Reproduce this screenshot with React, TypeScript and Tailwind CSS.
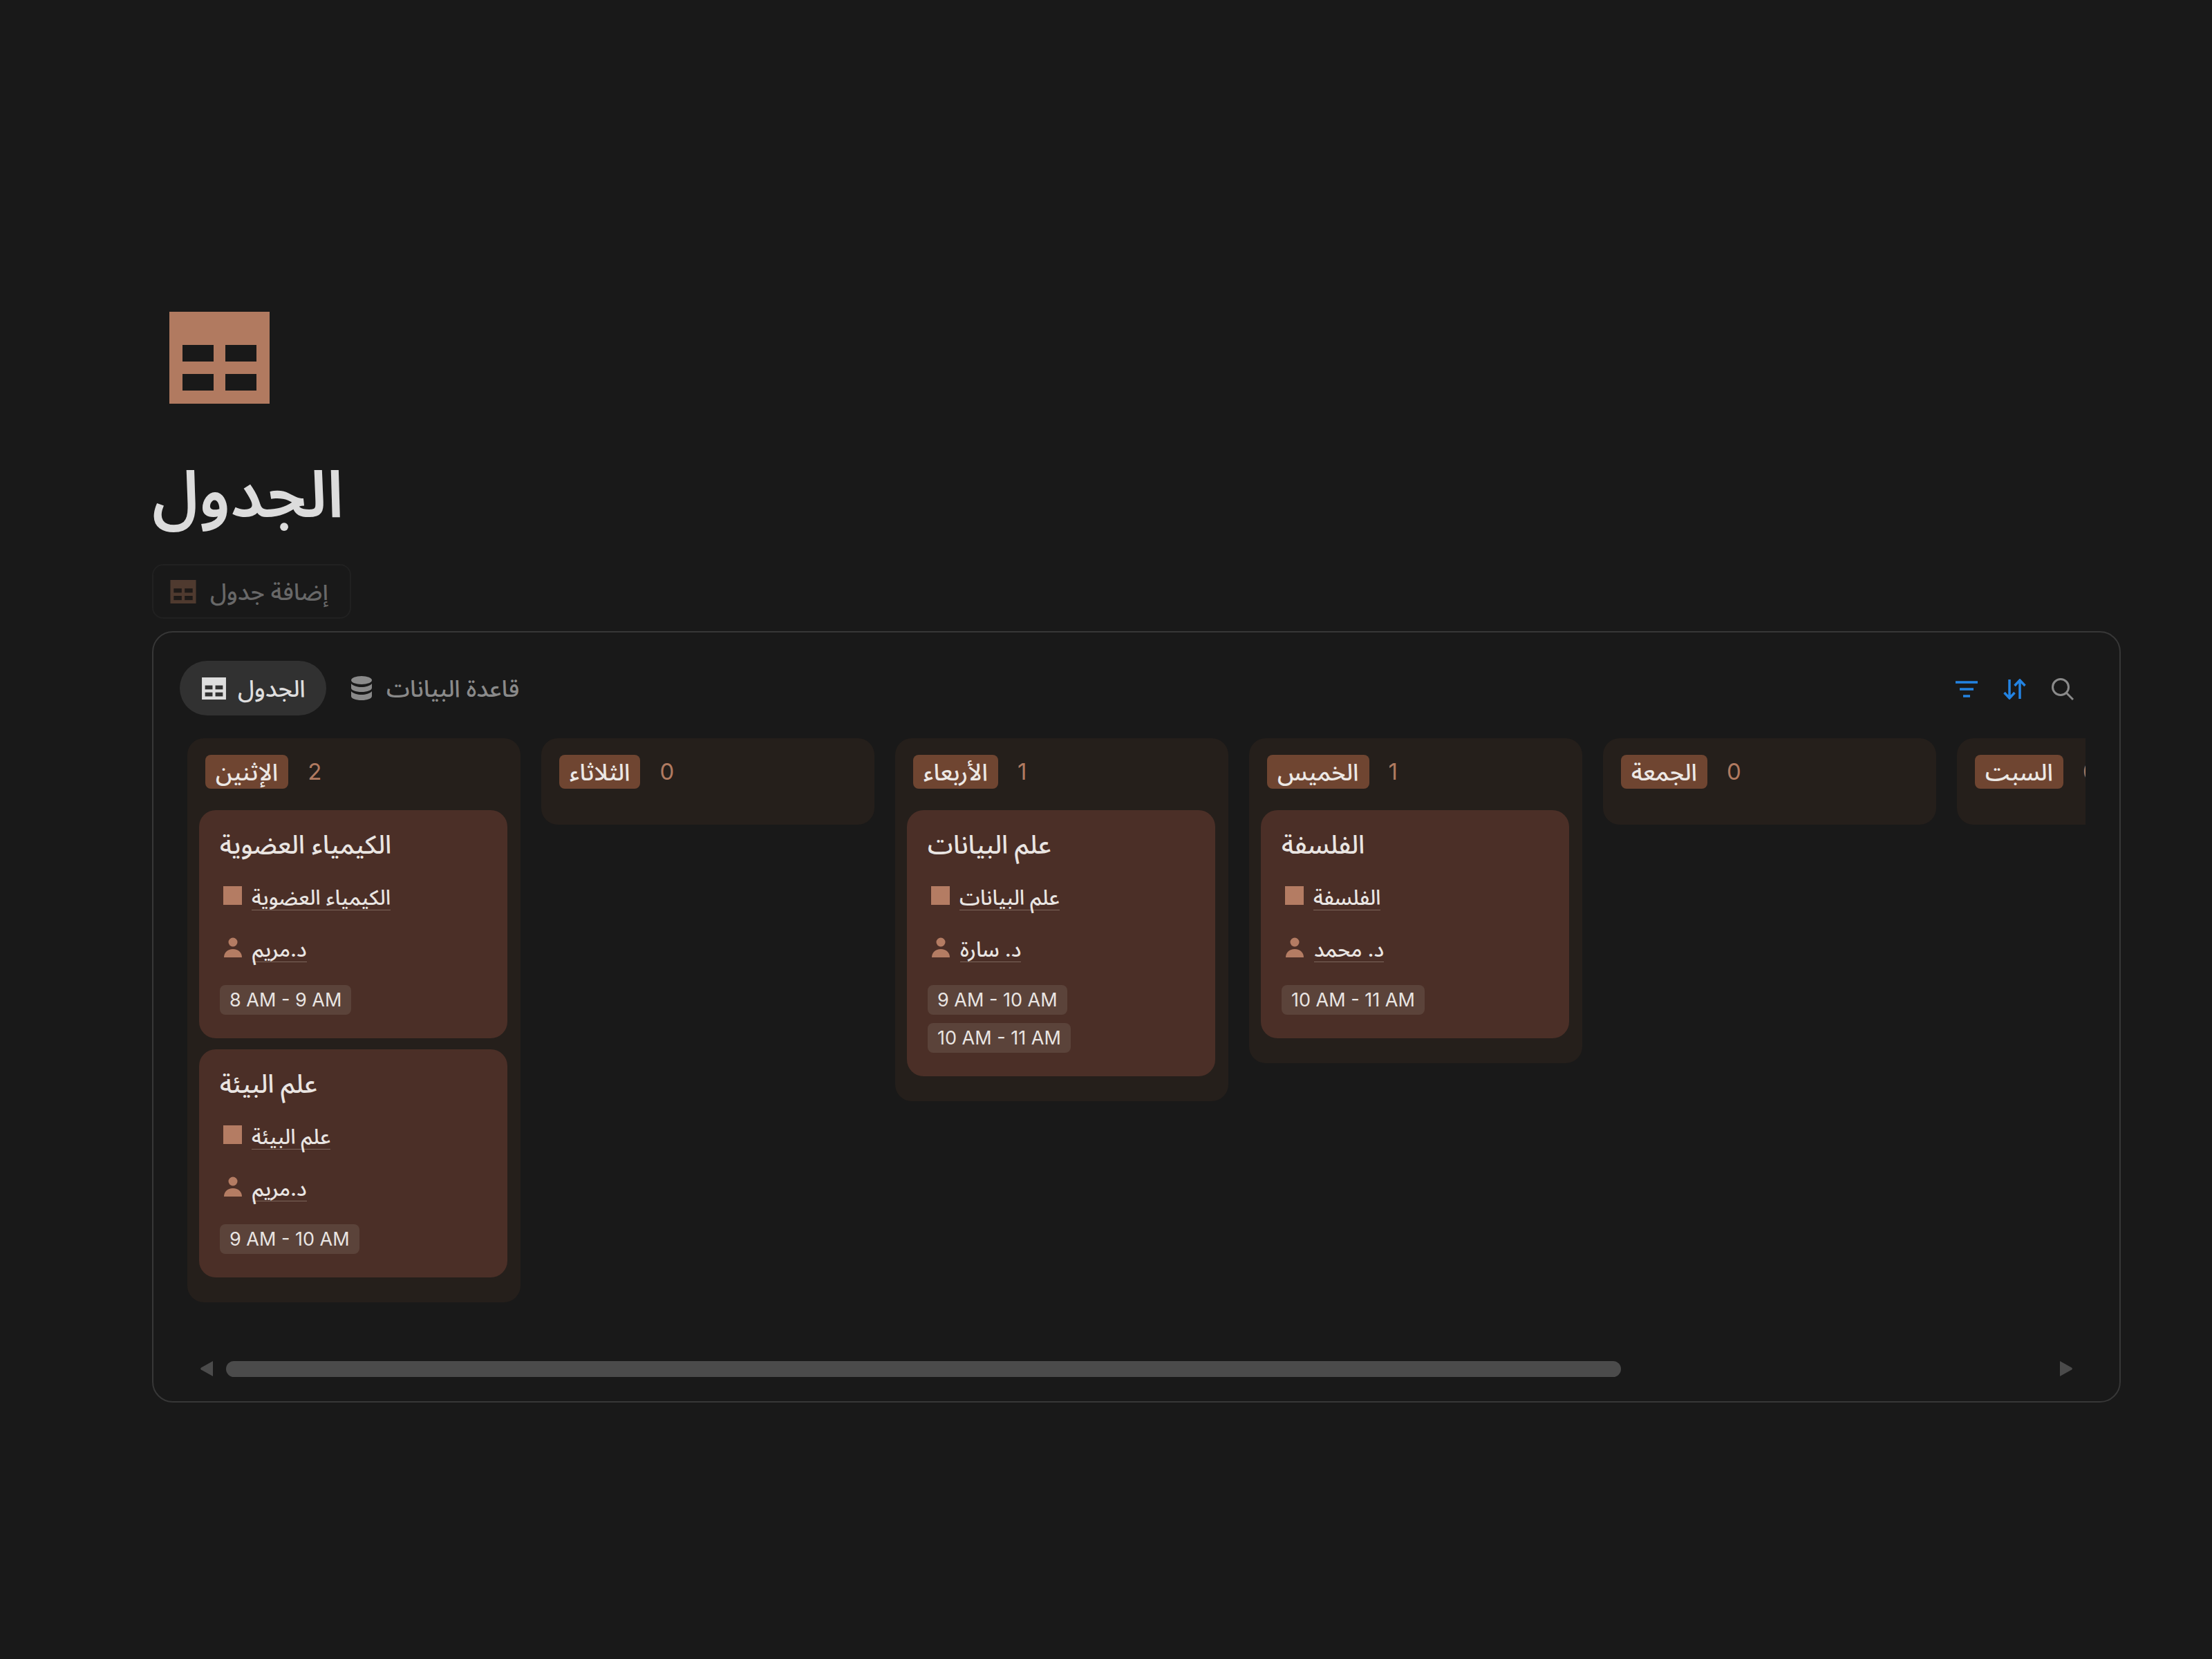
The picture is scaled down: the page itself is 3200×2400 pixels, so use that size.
const font = { fontFamily: '"Inter", "Noto Sans Arabic", "Noto Sans", "Open Sans", "DejaVu Sans", sans-serif' };

type Lesson = { title: string; teacher: string; times: string[] };
type Day = { name: string; lessons: Lesson[] };

const days: Day[] = [
  {
    name: "الإثنين",
    lessons: [
      { title: "الكيمياء العضوية", teacher: "د.مريم", times: ["8 AM - 9 AM"] },
      { title: "علم البيئة", teacher: "د.مريم", times: ["9 AM - 10 AM"] },
    ],
  },
  { name: "الثلاثاء", lessons: [] },
  {
    name: "الأربعاء",
    lessons: [{ title: "علم البيانات", teacher: "د. سارة", times: ["9 AM - 10 AM", "10 AM - 11 AM"] }],
  },
  {
    name: "الخميس",
    lessons: [{ title: "الفلسفة", teacher: "د. محمد", times: ["10 AM - 11 AM"] }],
  },
  { name: "الجمعة", lessons: [] },
  { name: "السبت", lessons: [] },
];

function TableIcon({ className, hole }: { className: string; hole: string }) {
  return (
    <svg viewBox="0 0 145 133" className={className}>
      <rect width="145" height="133" fill="currentColor" />
      <g fill={hole}>
        <rect x="19" y="48" width="45" height="24" />
        <rect x="81" y="48" width="45" height="24" />
        <rect x="19" y="90" width="45" height="24" />
        <rect x="81" y="90" width="45" height="24" />
      </g>
    </svg>
  );
}

function DatabaseIcon() {
  return (
    <svg viewBox="0 0 32 36" className="w-[32px] h-[36px] text-[#8a8a8a]" fill="currentColor">
      <ellipse cx="16" cy="6" rx="15" ry="6" />
      <path d="M1 11c3 3.500 9 5 15 5s12-1.500 15-5v6c0 3.500-6.500 6-15 6S1 20.500 1 17z" />
      <path d="M1 22c3 3.500 9 5 15 5s12-1.500 15-5v7c0 3.500-6.500 6-15 6S1 32.500 1 29z" />
    </svg>
  );
}

function PersonIcon() {
  return (
    <svg viewBox="0 0 28 29" className="w-[28px] h-[29px] mb-[6px] text-[#b47c63] shrink-0" fill="currentColor">
      <circle cx="14" cy="7" r="6.500" />
      <path d="M1 29c0-7 5-12 13-12s13 5 13 12z" />
    </svg>
  );
}

function FilterIcon() {
  return (
    <svg viewBox="0 0 32 24" className="w-[32px] h-[24px]" stroke="#2383e2" strokeWidth="3.500" fill="none">
      <path d="M0 2h32M6 12h20M11 22h10" />
    </svg>
  );
}

function SortIcon() {
  return (
    <svg viewBox="0 0 33 30" className="w-[33px] h-[30px]" stroke="#2383e2" strokeWidth="3.500" fill="none">
      <path d="M9 1v27M1.500 20l7.500 8 7.500-8M24 29V2M16.500 10L24 2l7.500 8" />
    </svg>
  );
}

function SearchIcon() {
  return (
    <svg viewBox="0 0 32 32" className="w-[32px] h-[32px]" stroke="#8a8a8a" strokeWidth="3" fill="none">
      <circle cx="13" cy="13" r="11.500" />
      <path d="M21.500 21.500L31 31" />
    </svg>
  );
}

function LessonCard({ lesson }: { lesson: Lesson }) {
  return (
    <div className="w-[446px] rounded-[24px] bg-[#4b2f27] px-[30px] pt-[24px] pb-[34px] text-[#e9e5e2]">
      <div className="h-[52px] leading-[52px] text-[37px] font-medium">{lesson.title}</div>
      <div className="mt-[28px] h-[44px] pl-[5px] flex items-center gap-[14px]">
        <div className="w-[27px] h-[27px] mb-[6px] bg-[#b47c63] shrink-0" />
        <span className="text-[30px] leading-[36px] font-medium border-b border-[#7d665c]">{lesson.title}</span>
      </div>
      <div className="mt-[31px] h-[44px] pl-[5px] flex items-center gap-[14px]">
        <PersonIcon />
        <span className="text-[30px] leading-[36px] font-medium border-b border-[#7d665c]">{lesson.teacher}</span>
      </div>
      <div className="mt-[30px] flex flex-col items-start gap-[12px]">
        {lesson.times.map((time) => (
          <span key={time} className="h-[43px] px-[14px] leading-[43px] rounded-[8px] bg-[#5b433a] text-[27px] whitespace-nowrap">
            {time}
          </span>
        ))}
      </div>
    </div>
  );
}

function DayColumn({ day }: { day: Day }) {
  return (
    <div className={`w-[482px] shrink-0 rounded-[24px] bg-[#251f1b] pl-[17px] ${day.lessons.length ? "pb-[36px]" : "pb-[52px]"} pt-[24px]`}>
      <div className="flex items-center h-[49px] pl-[9px] gap-[28px]">
        <span className="h-[49px] px-[15px] leading-[49px] rounded-[8px] bg-[#6f4531] text-[34px] font-medium text-[#ece8e5] whitespace-nowrap">
          {day.name}
        </span>
        <span className="text-[33px] text-[#b07a60]">{day.lessons.length}</span>
      </div>
      {day.lessons.length > 0 && (
        <div className="mt-[31px] flex flex-col gap-[16px]">
          {day.lessons.map((lesson) => (
            <LessonCard key={lesson.title} lesson={lesson} />
          ))}
        </div>
      )}
    </div>
  );
}

export default function App() {
  return (
    <div className="w-[3200px] h-[2400px] bg-[#191919] pt-[451px] pl-[220px]" style={font}>
      {/* page header */}
      <div className="pl-[25px]">
        <TableIcon className="w-[145px] h-[133px] text-[#b17a60]" hole="#191919" />
      </div>
      <h1 className="mt-[70px] h-[120px] leading-[120px] text-[94px] font-semibold text-[#dcdcdc]">الجدول</h1>
      <div className="mt-[42px] w-[288px] h-[79px] rounded-[16px] border-2 border-[#212121] flex items-center pl-[24px] gap-[20px]">
        <TableIcon className="w-[38px] h-[34px] text-[#4f3a2f]" hole="#1e1a18" />
        <span className="text-[34px] text-[#686868] font-medium whitespace-nowrap">إضافة جدول</span>
      </div>

      {/* database view */}
      <div className="mt-[18px] w-[2848px] h-[1116px] rounded-[30px] border-2 border-[#373737] pt-[41px] flex flex-col">
        <div className="flex items-center h-[79px] pl-[38px] pr-[66px]">
          <div className="w-[212px] h-[79px] rounded-full bg-[#313131] flex items-center pl-[32px] gap-[17px]">
            <TableIcon className="w-[35px] h-[32px] text-[#dedede]" hole="#313131" />
            <span className="text-[34px] font-medium text-[#dedede]">الجدول</span>
          </div>
          <div className="ml-[35px] flex items-center gap-[20px]">
            <DatabaseIcon />
            <span className="text-[34px] font-medium text-[#8a8a8a] whitespace-nowrap">قاعدة البيانات</span>
          </div>
          <div className="ml-auto pt-[3px] flex items-center gap-[37px]">
            <FilterIcon />
            <SortIcon />
            <SearchIcon />
          </div>
        </div>

        <div className="mt-[33px] ml-[49px] w-[2746px] flex items-start gap-[30px] overflow-hidden">
          {days.map((day) => (
            <DayColumn key={day.name} day={day} />
          ))}
        </div>

        {/* horizontal scrollbar */}
        <div className="mt-auto mb-[35px] ml-[68px] mr-[68px] flex items-center h-[24px]">
          <svg viewBox="0 0 18 24" className="w-[18px] h-[24px] text-[#4b4b4b]" fill="currentColor">
            <path d="M18 1v22L1 13.500a2 2 0 0 1 0-3z" />
          </svg>
          <div className="ml-[19px] w-[2018px] h-[23px] rounded-full bg-[#4b4b4b]" />
          <svg viewBox="0 0 18 24" className="ml-auto w-[18px] h-[24px] text-[#4b4b4b]" fill="currentColor">
            <path d="M0 1v22l17-9.500a2 2 0 0 0 0-3z" />
          </svg>
        </div>
      </div>
    </div>
  );
}
